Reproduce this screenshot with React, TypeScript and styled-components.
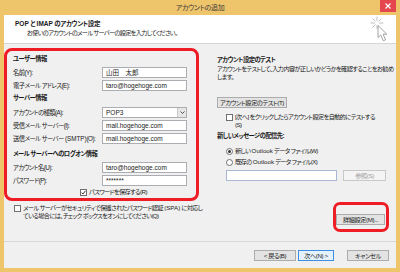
import React from "react";
import styled, { createGlobalStyle } from "styled-components";

const GlobalStyle = createGlobalStyle`
  html, body { margin: 0; padding: 0; }
  body {
    width: 400px;
    height: 272px;
    overflow: hidden;
    font-family: "Liberation Sans", "Noto Sans CJK JP", sans-serif;
    font-feature-settings: "palt";
    color: #1a1a1a;
  }
  * { box-sizing: border-box; }
`;

const Window = styled.div`
  width: 400px;
  height: 272px;
  display: flex;
  flex-direction: column;
  background: #efc56c;
`;

const TitleBar = styled.div`
  height: 15px;
  display: grid;
  grid-template-columns: 1fr auto 1fr;
  align-items: start;
`;

const Title = styled.div`
  grid-column: 2;
  font-size: 7px;
  line-height: 15px;
  color: #3a3a3a;
  letter-spacing: -0.4px;
`;

const CloseBtn = styled.div`
  grid-column: 3;
  justify-self: end;
  margin-right: 4px;
  width: 16px;
  height: 12px;
  background: #e5474f;
  display: flex;
  align-items: center;
  justify-content: center;
`;

const Frame = styled.div`
  flex: 1;
  min-height: 0;
  margin: 0 4px 4px;
  display: flex;
  flex-direction: column;
  background: #f0f0f0;
`;

const Header = styled.div`
  height: 29px;
  flex-shrink: 0;
  background: #fff;
  border-bottom: 1px solid #d6d6d6;
  display: flex;
  justify-content: space-between;
  padding: 4px 4px 0 11px;
`;

const HeadTitle = styled.div`
  font-size: 6.5px;
  font-weight: bold;
  line-height: 10px;
  letter-spacing: -0.4px;
`;

const HeadSub = styled.div`
  font-size: 6.2px;
  line-height: 8px;
  padding-left: 12px;
  letter-spacing: -0.7px;
`;

// latin words inside the squeezed japanese lines keep their normal width
const Latin = styled.span`
  letter-spacing: 0;
`;

const Body = styled.div`
  flex: 1;
  min-height: 0;
  display: grid;
  grid-template-columns: 195px 172px;
  column-gap: 18px;
  padding: 4px 7px 0 0;
`;

const LeftCol = styled.div`
  display: flex;
  flex-direction: column;
`;

const Group = styled.div`
  border: 3px solid #ee1c24;
  border-radius: 8px;
  padding: 3px 9px 2px 6px;
  display: flex;
  flex-direction: column;
`;

const SectionTitle = styled.div<{ $top?: number }>`
  font-size: 6.3px;
  font-weight: bold;
  line-height: 10px;
  margin-top: ${(p) => p.$top ?? 0}px;
  letter-spacing: -0.55px;
  white-space: nowrap;
`;

const FieldRow = styled.div<{ $top: number }>`
  display: grid;
  grid-template-columns: 1fr 85px;
  align-items: center;
  height: 11px;
  margin-top: ${(p) => p.$top}px;
`;

const Label = styled.div`
  font-size: 6.3px;
  letter-spacing: -0.55px;
  white-space: nowrap;
`;

const Input = styled.div<{ $width?: number; $tone?: string }>`
  width: ${(p) => (p.$width ? `${p.$width}px` : "auto")};
  height: 11px;
  background: #fff;
  border: 1px solid ${(p) => p.$tone ?? "#abadb3"};
  font-size: 6.5px;
  line-height: 9px;
  padding-left: 3px;
  white-space: nowrap;
  display: flex;
  align-items: center;
`;

const SelectBox = styled(Input)`
  justify-content: space-between;
  padding-right: 0;
`;

const SelectArrow = styled.div`
  width: 9px;
  height: 9px;
  background: #e6e6e6;
  border-left: 1px solid #c8c8c8;
  display: flex;
  align-items: center;
  justify-content: center;
`;

const CheckLine = styled.div<{ $top: number; $left: number }>`
  display: flex;
  align-items: flex-start;
  gap: 2px;
  margin-top: ${(p) => p.$top}px;
  margin-left: ${(p) => p.$left}px;
  font-size: 6.2px;
  line-height: 8px;
  letter-spacing: -0.6px;
  white-space: nowrap;
`;

const Box = styled.div<{ $round?: boolean }>`
  width: 7px;
  height: 7px;
  margin-top: 0.5px;
  flex-shrink: 0;
  background: #fff;
  border: 1px solid #707070;
  border-radius: ${(p) => (p.$round ? "50%" : "0")};
  display: flex;
  align-items: center;
  justify-content: center;
`;

const Dot = styled.div`
  width: 3px;
  height: 3px;
  border-radius: 50%;
  background: #333;
`;

const RightCol = styled.div`
  display: flex;
  flex-direction: column;
  padding-top: 7px;
`;

const Desc = styled.div`
  font-size: 6.2px;
  line-height: 8px;
  letter-spacing: -0.6px;
  white-space: nowrap;
`;

const Button = styled.button<{ $width: number; $focus?: boolean; $off?: boolean }>`
  width: ${(p) => p.$width}px;
  height: 11px;
  padding: 0;
  margin: 0;
  font-family: inherit;
  font-feature-settings: "palt";
  font-size: 6.2px;
  letter-spacing: -0.4px;
  line-height: 9px;
  white-space: nowrap;
  color: ${(p) => (p.$off ? "#a0a0a0" : "#1a1a1a")};
  background: ${(p) => (p.$off ? "#f4f4f4" : p.$focus ? "#e5f1fb" : "#e3e3e3")};
  border: 1px solid ${(p) => (p.$off ? "#c8c8c8" : p.$focus ? "#3c8fe0" : "#acacac")};
`;

const TestButton = styled(Button)`
  align-self: flex-start;
  margin-top: 16px;
`;

const BrowseRow = styled.div`
  display: flex;
  gap: 6px;
  margin: 4px 0 0 9px;
`;

const Ring = styled.div`
  margin-top: auto;
  margin-bottom: 9px;
  align-self: flex-end;
  border: 3px solid #ee1c24;
  border-radius: 7px;
  padding: 3px 1px 3px 0;
`;

const Footer = styled.div`
  height: 27px;
  flex-shrink: 0;
  border-top: 1px solid #d8d8d8;
  display: flex;
  justify-content: flex-end;
  align-items: flex-start;
  padding: 8px 7px 0 0;
`;

const FooterButton = styled(Button)<{ $gap: number }>`
  margin-left: ${(p) => p.$gap}px;
`;

const Check = ({ on }: { on?: boolean }) => (
  <Box>
    {on && (
      <svg width="5" height="5" viewBox="0 0 5 5">
        <path d="M0.5 2.6 L1.9 4 L4.5 0.8" stroke="#333" strokeWidth="1" fill="none" />
      </svg>
    )}
  </Box>
);

const Radio = ({ on }: { on?: boolean }) => <Box $round>{on && <Dot />}</Box>;

const WizardIcon = () => (
  <svg width="22" height="27" viewBox="0 0 22 27" style={{ marginTop: -3 }}>
    <g stroke="#b0b0b0" strokeWidth="0.8" strokeLinecap="round">
      <line x1="7" y1="1" x2="7" y2="4.5" />
      <line x1="7" y1="9.5" x2="7" y2="12.5" />
      <line x1="1" y1="7" x2="4.5" y2="7" />
      <line x1="9.5" y1="7" x2="13" y2="7" />
      <line x1="2.8" y1="2.8" x2="5.2" y2="5.2" />
      <line x1="11.2" y1="2.8" x2="8.8" y2="5.2" />
      <line x1="2.8" y1="11.2" x2="5.2" y2="8.8" />
    </g>
    <path
      d="M8 9.5 L8 21.5 L10.8 19 L13.3 24.8 L15.6 23.8 L13.1 18.2 L16.8 18.2 Z"
      fill="#fff"
      stroke="#9a9a9a"
      strokeWidth="0.9"
      strokeLinejoin="round"
    />
  </svg>
);

export default function App() {
  return (
    <>
      <GlobalStyle />
      <Window>
        <TitleBar>
          <Title>アカウントの追加</Title>
          <CloseBtn>
            <svg width="6" height="6" viewBox="0 0 6 6">
              <path d="M0.5 0.5 L5.5 5.5 M5.5 0.5 L0.5 5.5" stroke="#fff" strokeWidth="1.2" />
            </svg>
          </CloseBtn>
        </TitleBar>
        <Frame>
          <Header>
            <div>
              <HeadTitle>
                <Latin>POP</Latin> と <Latin>IMAP</Latin> のアカウント設定
              </HeadTitle>
              <HeadSub>お使いのアカウントのメール サーバーの設定を入力してください。</HeadSub>
            </div>
            <WizardIcon />
          </Header>
          <Body>
            <LeftCol>
              <Group>
                <SectionTitle>ユーザー情報</SectionTitle>
                <FieldRow $top={3}>
                  <Label>名前(Y):</Label>
                  <Input>山田　太郎</Input>
                </FieldRow>
                <FieldRow $top={2}>
                  <Label>電子メール アドレス(E):</Label>
                  <Input>taro@hogehoge.com</Input>
                </FieldRow>
                <SectionTitle $top={2}>サーバー情報</SectionTitle>
                <FieldRow $top={4}>
                  <Label>アカウントの種類(A):</Label>
                  <SelectBox>
                    POP3
                    <SelectArrow>
                      <svg width="5" height="3" viewBox="0 0 5 3">
                        <path d="M0.5 0.5 L2.5 2.5 L4.5 0.5" stroke="#444" strokeWidth="0.9" fill="none" />
                      </svg>
                    </SelectArrow>
                  </SelectBox>
                </FieldRow>
                <FieldRow $top={2}>
                  <Label>受信メール サーバー(I):</Label>
                  <Input>mail.hogehoge.com</Input>
                </FieldRow>
                <FieldRow $top={2}>
                  <Label>
                    送信メール サーバー <Latin>(SMTP)</Latin>(O):
                  </Label>
                  <Input>mail.hogehoge.com</Input>
                </FieldRow>
                <SectionTitle $top={5}>メール サーバーへのログオン情報</SectionTitle>
                <FieldRow $top={3}>
                  <Label>アカウント名(U):</Label>
                  <Input>taro@hogehoge.com</Input>
                </FieldRow>
                <FieldRow $top={2}>
                  <Label>パスワード(P):</Label>
                  <Input>*******</Input>
                </FieldRow>
                <CheckLine $top={2} $left={67}>
                  <Check on />
                  パスワードを保存する(R)
                </CheckLine>
              </Group>
              <CheckLine $top={3} $left={10}>
                <Check />
                <div>
                  メール サーバーがセキュリティで保護されたパスワード認証 <Latin>(SPA)</Latin> に対応し
                  <br />
                  ている場合には、チェック ボックスをオンにしてください(Q)
                </div>
              </CheckLine>
            </LeftCol>
            <RightCol>
              <SectionTitle>アカウント設定のテスト</SectionTitle>
              <Desc>
                アカウントをテストして、入力内容が正しいかどうかを確認することをお勧め
                <br />
                します。
              </Desc>
              <TestButton $width={70}>アカウント設定のテスト(T)</TestButton>
              <CheckLine $top={5} $left={9}>
                <Check />
                <div>
                  [次へ] をクリックしたらアカウント設定を自動的にテストする
                  <br />
                  (S)
                </div>
              </CheckLine>
              <SectionTitle $top={2}>新しいメッセージの配信先:</SectionTitle>
              <CheckLine $top={6} $left={9}>
                <Radio on />
                <span>
                  新しい <Latin>Outlook</Latin> データ ファイル(W)
                </span>
              </CheckLine>
              <CheckLine $top={3} $left={9}>
                <Radio />
                <span>
                  既存の <Latin>Outlook</Latin> データ ファイル(X)
                </span>
              </CheckLine>
              <BrowseRow>
                <Input $width={111} $tone="#a9b9d3" />
                <Button $width={43} $off>
                  参照(S)
                </Button>
              </BrowseRow>
              <Ring>
                <Button $width={49}>詳細設定(M)...</Button>
              </Ring>
            </RightCol>
          </Body>
          <Footer>
            <FooterButton $width={42} $gap={0}>
              &lt; 戻る(B)
            </FooterButton>
            <FooterButton $width={36} $gap={2} $focus>
              次へ(N) &gt;
            </FooterButton>
            <FooterButton $width={42} $gap={13}>
              キャンセル
            </FooterButton>
          </Footer>
        </Frame>
      </Window>
    </>
  );
}
